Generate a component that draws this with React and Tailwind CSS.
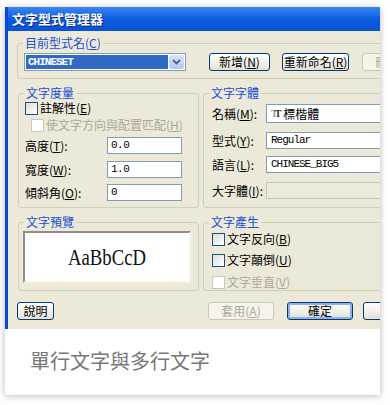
import React from 'react';

const cjk = "font-['Noto_Sans_CJK_TC','Noto_Sans_CJK_SC',sans-serif]";
const mono = "font-['Liberation_Mono',monospace]";

// accelerator letter
const U = ({ children }) => <span className="underline underline-offset-[1px]">{children}</span>;

function Group({ title, className = '', children }) {
  return (
    <fieldset className={`rounded-[3px] border border-[#D0D0BF] ${className}`}>
      <legend className="ml-[5px] px-[2px] text-[12px] leading-[14px] text-[#1A4FD6]">{title}</legend>
      {children}
    </fieldset>
  );
}

function XpButton({ children, className = '', disabled, focused }) {
  return (
    <div
      className={`flex h-[18px] shrink-0 items-center justify-center rounded-[3px] border text-[12px] leading-none ${
        disabled
          ? 'border-[#C9C7BA] bg-[#F5F4EA] text-[#ACA899]'
          : 'border-[#003C74] bg-gradient-to-b from-white to-[#E3E1D6] text-black'
      } ${focused ? 'shadow-[inset_0_0_0_2px_#8EB0F0]' : ''} ${className}`}
    >
      {children}
    </div>
  );
}

function Check({ label, disabled, className = '' }) {
  return (
    <div className={`flex items-center gap-[2px] text-[12px] leading-[14px] ${className}`}>
      <span
        className={`h-[13px] w-[13px] shrink-0 border ${
          disabled ? 'border-[#CAC8BB] bg-white' : 'border-[#1C5180] bg-gradient-to-br from-[#DCDCD7] to-white'
        }`}
      />
      <span className={disabled ? 'text-[#ACA899]' : 'text-black'}>{label}</span>
    </div>
  );
}

function Field({ label, value, className = '' }) {
  return (
    <div className={`flex items-center ${className}`}>
      <span className="w-[88px] pl-[6px] text-[12px] leading-none">{label}</span>
      <div className={`flex h-[17px] w-[75px] items-center border border-[#7F9DB9] bg-white pl-[3px] text-[11px] tracking-[-0.5px] ${mono}`}>
        {value}
      </div>
    </div>
  );
}

function FontRow({ label, children, className = '', disabled, tall }) {
  return (
    <div className={`flex items-center ${className}`}>
      <span className="w-[62px] shrink-0 pl-[8px] text-[12px] leading-none">{label}</span>
      <div
        className={`flex w-[200px] shrink-0 items-center border pl-[4px] text-[11px] tracking-[-1px] ${mono} ${
          tall ? 'h-[19px]' : 'h-[17px]'
        } ${disabled ? 'border-[#C9C7BA] bg-[#EBEADB]' : 'border-[#7F9DB9] bg-white'}`}
      >
        {children}
      </div>
    </div>
  );
}

export default function App() {
  return (
    <div className={`min-h-[405px] bg-white pl-[5px] pt-[7px] ${cjk}`}>
      <div className="h-[388px] w-[375px] overflow-hidden bg-white shadow-[0_1px_7px_rgba(0,0,0,0.28)]">
        {/* dialog screenshot */}
        <div className="h-[322px] overflow-hidden">
          <div className="flex h-full w-[480px] flex-col border-l-[3px] border-[#0A46D8]">
            <div className="flex h-[24px] items-center bg-gradient-to-b from-[#3A86F4] via-[#0B5CE0] to-[#0A52D6] pl-[4px] text-[13px] font-bold text-white [text-shadow:1px_1px_0_#0A2A80]">
              文字型式管理器
            </div>
            <div className="flex-1 bg-[#ECE9D8] pl-[9px] pt-[5px]">
              <Group title={<>目前型式名(<U>C</U>)</>} className="h-[43px] w-[460px]">
                <div className="ml-[6px] mt-[3px] flex items-center">
                  <div className="flex h-[18px] w-[162px] items-center border border-[#7F9DB9] bg-white p-[1px]">
                    <div className={`flex h-full flex-1 items-center bg-[#316AC5] pl-[2px] text-[11px] font-bold tracking-[-1px] text-white ${mono}`}>
                      CHINESET
                    </div>
                    <div className="ml-[1px] flex h-full w-[15px] items-center justify-center rounded-[2px] bg-gradient-to-b from-[#D6E3FC] to-[#B2C7F4]">
                      <svg width="9" height="6" viewBox="0 0 9 6">
                        <path d="M1 1 L4.5 4.5 L8 1" fill="none" stroke="#4D6185" strokeWidth="1.8" />
                      </svg>
                    </div>
                  </div>
                  <XpButton className="ml-[23px] w-[61px]">新增(<U>N</U>)</XpButton>
                  <XpButton className="ml-[12px] w-[67px]">重新命名(<U>R</U>)</XpButton>
                  <XpButton disabled className="ml-[13px] w-[67px]">刪除(<U>D</U>)</XpButton>
                </div>
              </Group>

              <div className="ml-[1px] mt-[7px] flex gap-[4px]">
                <Group title="文字度量" className="h-[122px] w-[181px]">
                  <Check label={<>註解性(<U>E</U>)</>} className="ml-[6px] mt-[1px]" />
                  <Check disabled label={<>使文字方向與配置匹配(<U>H</U>)</>} className="ml-[12px] mt-[3px]" />
                  <Field label={<>高度(<U>T</U>):</>} value="0.0" className="mt-[5px]" />
                  <Field label={<>寬度(<U>W</U>):</>} value="1.0" className="mt-[7px]" />
                  <Field label={<>傾斜角(<U>O</U>):</>} value="0" className="mt-[6px]" />
                </Group>
                <Group title="文字字體" className="h-[122px] w-[270px]">
                  <FontRow tall label={<>名稱(<U>M</U>):</>} className="mt-[4px]">
                    <span className="mr-[3px] font-['Liberation_Serif',serif] text-[10px] font-bold tracking-[-3px]">
                      <span className="text-[#9A9A9A]">T</span>
                      <span className="text-[#333]">T</span>
                    </span>
                    <span className={`ml-[2px] text-[12px] tracking-normal ${cjk}`}>標楷體</span>
                  </FontRow>
                  <FontRow label={<>型式(<U>Y</U>):</>} className="mt-[9px]">Regular</FontRow>
                  <FontRow label={<>語言(<U>L</U>):</>} className="mt-[7px]">CHINESE_BIG5</FontRow>
                  <FontRow disabled label={<>大字體(<U>I</U>):</>} className="mt-[9px]" />
                </Group>
              </div>

              <div className="ml-[1px] mt-[7px] flex gap-[4px]">
                <Group title="文字預覽" className="h-[76px] w-[181px]">
                  <div className="ml-[4px] mt-[2px] flex h-[52px] w-[168px] items-center justify-center border-2 border-b-[#F4F3EE] border-l-[#8E8E8E] border-r-[#F4F3EE] border-t-[#8E8E8E] bg-white">
                    <span className="inline-block scale-x-[0.78] font-['Liberation_Serif',serif] text-[24px] leading-none text-[#111]">
                      AaBbCcD
                    </span>
                  </div>
                </Group>
                <Group title="文字產生" className="h-[76px] w-[270px]">
                  <Check label={<>文字反向(<U>B</U>)</>} className="ml-[8px] mt-[3px]" />
                  <Check label={<>文字顛倒(<U>U</U>)</>} className="ml-[8px] mt-[7px]" />
                  <Check disabled label={<>文字垂直(<U>V</U>)</>} className="ml-[8px] mt-[8px]" />
                </Group>
              </div>

              <div className="mt-[11px] flex">
                <XpButton className="w-[37px]">說明</XpButton>
                <XpButton disabled className="ml-[154px] w-[66px]">套用(<U>A</U>)</XpButton>
                <XpButton focused className="ml-[13px] w-[66px]">確定</XpButton>
                <XpButton className="ml-[10px] w-[66px]">取消</XpButton>
              </div>
            </div>
          </div>
        </div>

        {/* caption */}
        <div className="pl-[25px] pt-[22px] text-[20px] leading-[20px] text-[#777]">單行文字與多行文字</div>
      </div>
    </div>
  );
}
